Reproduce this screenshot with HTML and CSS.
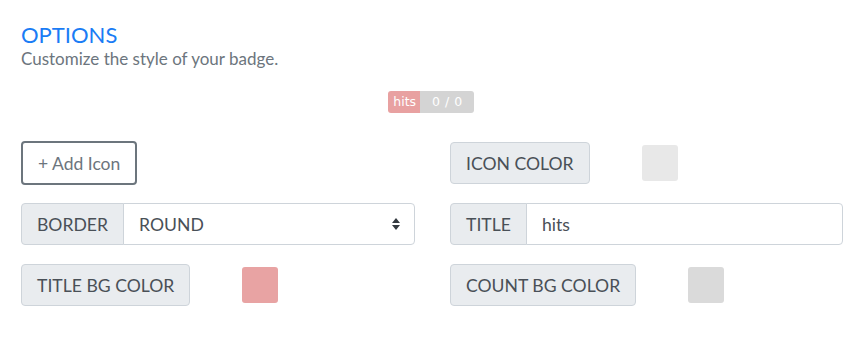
FILE: index.html
```html
<!DOCTYPE html>
<html lang="en">
<head>
    <meta charset="UTF-8">
    <meta name="viewport" content="width=device-width, initial-scale=1.0">
    <title>Badge Options</title>
    <link rel="stylesheet" href="styles.css">
</head>
<body>
    <div class="options">
        <h2 class="title">OPTIONS</h2>
        <p class="subtitle">Customize the style of your badge.</p>

        <div class="preview">
            <span class="badge"><span class="badge-title">hits</span><span class="badge-count">0 / 0</span></span>
        </div>

        <div class="grid">
            <div class="row">
                <button class="add-icon">+ Add Icon</button>
            </div>
            <div class="row">
                <span class="label">ICON COLOR</span>
                <span class="swatch icon-color"></span>
            </div>

            <div class="row">
                <div class="group">
                    <span class="label">BORDER</span>
                    <div class="select">
                        <span>ROUND</span>
                        <svg width="8" height="12" viewBox="0 0 8 12"><path d="M4 0 L8 5 H0 Z M0 7 H8 L4 12 Z" fill="#343a40"/></svg>
                    </div>
                </div>
            </div>
            <div class="row">
                <div class="group">
                    <span class="label">TITLE</span>
                    <input class="field" type="text" value="hits">
                </div>
            </div>

            <div class="row">
                <span class="label">TITLE BG COLOR</span>
                <span class="swatch title-bg"></span>
            </div>
            <div class="row">
                <span class="label">COUNT BG COLOR</span>
                <span class="swatch count-bg"></span>
            </div>
        </div>
    </div>
</body>
</html>
```

FILE: styles.css
```css
body {
    margin: 0;
    font-family: Lato, "Open Sans", sans-serif;
    color: #495057;
    background: #fff;
}

.options {
    padding: 22px 23px 0 21px;
}

.title {
    margin: 0;
    font-size: 22px;
    font-weight: 400;
    line-height: 26px;
    color: #1a7cf5;
}

.subtitle {
    margin: 0;
    font-size: 17px;
    line-height: 21px;
    color: #6c757d;
}

.preview {
    display: flex;
    justify-content: center;
    margin-top: 22px;
    padding-right: 2px;
}

.badge {
    display: flex;
    font-family: "DejaVu Sans", sans-serif;
    font-size: 12.5px;
    line-height: 22px;
    color: #fff;
    border-radius: 3px;
    overflow: hidden;
}

.badge-title {
    background: #e8a1a1;
    padding: 0 4px 0 5px;
}

.badge-count {
    background: #d4d4d4;
    padding: 0 11px 0 12px;
    letter-spacing: 0.5px;
}

.grid {
    display: grid;
    grid-template-columns: 394px 393px;
    column-gap: 35px;
    row-gap: 19px;
    margin-top: 29px;
}

.row {
    display: flex;
    align-items: center;
    height: 42px;
}

.add-icon {
    height: 44px;
    padding: 0 15px;
    font-family: inherit;
    font-size: 17.5px;
    color: #6c757d;
    background: #fff;
    border: 2px solid #6c757d;
    border-radius: 4px;
}

.label {
    box-sizing: border-box;
    height: 42px;
    display: flex;
    align-items: center;
    padding: 0 15px;
    font-size: 17.6px;
    background: #e9ecef;
    border: 1px solid #ced4da;
    border-radius: 4px;
}

.group {
    display: flex;
    width: 100%;
}

.group .label {
    border-radius: 4px 0 0 4px;
}

.select, .field {
    box-sizing: border-box;
    flex: 1;
    height: 42px;
    margin-left: -1px;
    padding: 0 15px;
    font-family: inherit;
    font-size: 17.6px;
    color: #495057;
    background: #fff;
    border: 1px solid #ced4da;
    border-radius: 0 4px 4px 0;
}

.select {
    display: flex;
    align-items: center;
    justify-content: space-between;
    padding-right: 14px;
}

.field {
    outline: none;
}

.swatch {
    width: 36px;
    height: 36px;
    border-radius: 3px;
    margin-left: 52px;
}

.icon-color {
    background: #e8e8e8;
}

.title-bg {
    background: #e8a3a3;
}

.count-bg {
    background: #dadada;
}
```
